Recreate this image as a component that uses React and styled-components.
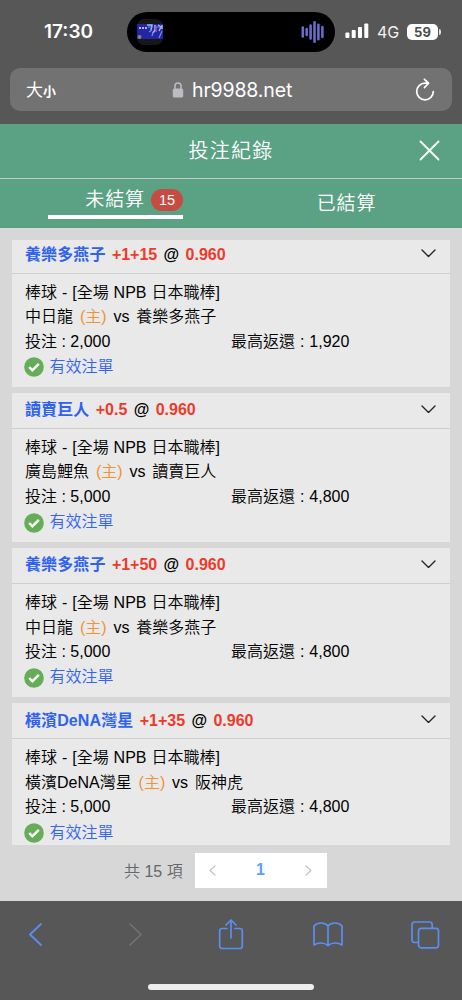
import React from "react";
import styled, { createGlobalStyle } from "styled-components";

const GlobalStyle = createGlobalStyle`
  *, *::before, *::after { box-sizing: border-box; }
  body { margin: 0; background: #575757; }
  svg { display: block; flex: none; }
`;

const Screen = styled.div`
  display: flex;
  flex-direction: column;
  width: 462px;
  height: 1000px;
  overflow: hidden;
  background: #575757;
  color: #000;
  font-family: "Liberation Sans", "Noto Sans CJK TC", sans-serif;
`;

const StatusBar = styled.div`
  display: flex;
  align-items: center;
  height: 40px;
  margin-top: 12px;
  color: #fff;
  font-family: Inter, sans-serif;
`;

const Clock = styled.div`
  width: 127px;
  padding-left: 44px;
  font-size: 19px;
  font-weight: 600;
  line-height: 40px;
  letter-spacing: 0;
`;

const Island = styled.div`
  display: flex;
  align-items: center;
  justify-content: space-between;
  width: 208px;
  height: 40px;
  padding: 0 10px 0 10px;
  border-radius: 20px;
  background: #000;
`;

const Network = styled.div`
  margin-left: 7px;
  font-size: 16px;
  line-height: 40px;
  color: #f0f0f0;
  width: 23px;
  white-space: nowrap;
  letter-spacing: -0.2px;
`;

const Signal = styled.div`
  margin-left: 10px;
  padding-bottom: 3px;
`;

const Battery = styled.div`
  position: relative;
  width: 31px;
  height: 16px;
  margin: 0 0 1px 7px;
  border-radius: 5px;
  background: #fff;
  color: #4c4c4c;
  font-size: 13px;
  font-weight: 700;
  line-height: 16px;
  text-align: center;
  &::after {
    content: "";
    position: absolute;
    right: -3px;
    top: 5px;
    width: 2px;
    height: 6px;
    border-radius: 0 2px 2px 0;
    background: #ddd;
  }
`;

const AddressBar = styled.div`
  display: flex;
  align-items: center;
  height: 43px;
  margin: 16px 10px 13px;
  padding: 0 17px 0 16px;
  border-radius: 10px;
  background: #727272;
  color: #fff;
`;

const TextSize = styled.div`
  display: flex;
  align-items: baseline;
  width: 146px;
  font-family: "Noto Sans CJK TC", sans-serif;
  font-weight: 400;
  font-size: 17px;
  line-height: 43px;
`;

const SmallGlyph = styled.span`
  font-size: 13px;
  font-weight: 700;
`;

const Url = styled.div`
  flex: 1;
  margin-left: 8px;
  padding-top: 1px;
  font-family: Inter, sans-serif;
  font-size: 19.5px;
  line-height: 42px;
  letter-spacing: -0.15px;
`;

const Header = styled.header`
  display: grid;
  grid-template-columns: 60px 1fr 60px;
  align-items: center;
  height: 55px;
  border-bottom: 1px solid #c6cdc9;
  background: #5ba284;
  color: #fff;
`;

const Title = styled.h1`
  grid-column: 2;
  margin: 0;
  font-size: 20px;
  font-weight: 350;
  line-height: 54px;
  letter-spacing: 1.2px;
  text-align: center;
`;

const CloseButton = styled.button`
  display: flex;
  padding: 0 0 2px 17px;
  border: 0;
  background: none;
`;

const Tabs = styled.nav`
  display: flex;
  height: 49px;
  padding: 0 48px;
  background: #5ba284;
  color: #fff;
`;

const Tab = styled.div`
  display: flex;
  align-items: center;
  justify-content: ${(p) => (p.$active ? "flex-end" : "center")};
  width: 135px;
  height: ${(p) => (p.$active ? "40px" : "49px")};
  margin-right: ${(p) => (p.$active ? "96px" : "0")};
  border-bottom: ${(p) => (p.$active ? "4px solid #fff" : "0")};
  font-size: 19px;
  font-weight: 350;
  letter-spacing: 0.9px;
  line-height: 30px;
`;

const TabLabel = styled.span`
  transform: translateY(${(p) => p.$shift || 0}px);
`;

const Badge = styled.span`
  width: 32px;
  height: 22px;
  margin: 5px 0 0 6px;
  border-radius: 11px;
  background: #c64b42;
  font-size: 14.5px;
  font-weight: 400;
  line-height: 22px;
  letter-spacing: 0;
  text-align: center;
`;

const Content = styled.main`
  display: flex;
  flex-direction: column;
  height: 673px;
  padding: 12px 12px 0;
  background: #d7d7d7;
`;

const BetList = styled.div`
  height: 605px;
  overflow: hidden;
`;

const BetStack = styled.div`
  display: flex;
  flex-direction: column;
  gap: 6px;
  margin-top: -2.4px;
`;

const Card = styled.article`
  flex: none;
  height: 149.2px;
  background: #e9e9e9;
`;

const CardHeader = styled.div`
  display: flex;
  align-items: center;
  justify-content: space-between;
  height: 36px;
  padding: 0 14px 0 13px;
  border-bottom: 1px solid #cecece;
  font-size: 16px;
  font-weight: 700;
  line-height: 34px;
  white-space: pre;
`;

const Selection = styled.span`
  word-spacing: 1.9px;
`;

const Expand = styled.span`
  padding-bottom: 3px;
`;

const Team = styled.span`
  color: #2f62f0;
  letter-spacing: 0.1px;
`;

const Odds = styled.span`
  color: #ed3a2b;
`;

const CardBody = styled.div`
  padding: 7px 13px 0;
  font-size: 16px;
  font-weight: 350;
  line-height: 24.6px;
`;

const Line = styled.div`
  display: flex;
  height: 24.6px;
  white-space: pre;
  word-spacing: ${(p) => p.$gap || "0.5px"};
`;

const Home = styled.span`
  color: #ee9436;
`;

const Half = styled.span`
  width: 206px;
  word-spacing: 0;
`;

const Valid = styled.div`
  display: flex;
  align-items: center;
  gap: 5px;
  height: 26px;
  margin-left: -0.6px;
  color: #3465ef;
`;

const PaginationRow = styled.div`
  display: flex;
  align-items: center;
  height: 50px;
  padding-left: 112px;
`;

const Total = styled.span`
  width: 71px;
  color: #66676a;
  font-size: 16px;
  font-weight: 350;
  white-space: nowrap;
`;

const Pager = styled.div`
  display: flex;
  align-items: center;
  justify-content: space-between;
  width: 132px;
  height: 35px;
  padding: 0 15px 0 14px;
  background: #fff;
  color: #5d9ff5;
  font-size: 16px;
  font-weight: 700;
`;

const Toolbar = styled.footer`
  display: grid;
  grid-template-columns: 71px 129px 62px 132px 62px;
  justify-content: start;
  justify-items: center;
  align-items: center;
  height: 67px;
`;

const HomeIndicator = styled.div`
  width: 166px;
  height: 6px;
  margin: 16px 0 0 148px;
  border-radius: 3px;
  background: #eee;
`;

const bets = [
  { team: "養樂多燕子", line: "+1+15", home: "中日龍", away: "養樂多燕子", stake: "2,000", payout: "1,920" },
  { team: "讀賣巨人", line: "+0.5", home: "廣島鯉魚", away: "讀賣巨人", stake: "5,000", payout: "4,800" },
  { team: "養樂多燕子", line: "+1+50", home: "中日龍", away: "養樂多燕子", stake: "5,000", payout: "4,800" },
  { team: "橫濱DeNA灣星", line: "+1+35", home: "橫濱DeNA灣星", away: "阪神虎", stake: "5,000", payout: "4,800" },
];

function Artwork() {
  return (
    <svg width="26" height="26" viewBox="0 0 26 26">
      <rect width="26" height="26" rx="7" fill="#171717" />
      <rect y="5" width="26" height="15" fill="#2424a5" />
      <path d="M2 9h8" stroke="#a9b9e0" strokeWidth="2" strokeDasharray="2 1" />
      <path d="M10 6h5l-1 5m4-5v5l-2 3M21 6l3 2-2 4m3-6v4" stroke="#a3bde6" strokeWidth="1.4" fill="none" />
      <path d="M11 8h5m2 0h6M12 13l3-2m7 8 3-7m-10 5 1-4" stroke="#6e93dc" strokeWidth="1.2" fill="none" />
      <path d="M19 8v5" stroke="#a94ab5" strokeWidth="1.6" />
      <circle cx="2.5" cy="18" r="2" fill="#858573" />
    </svg>
  );
}

function AudioBars() {
  return (
    <svg width="24" height="24" viewBox="0 0 24 24" stroke="#6b6bc8" strokeWidth="2.6" strokeLinecap="round">
      <path d="M1.8 7.5v9M5.7 9v6M9.6 5.5v13M13.5 2.2v19.6M17.4 4.7v14.6M21.4 7v10" />
    </svg>
  );
}

function Chevron({ width, height, color, stroke, dir }) {
  const points = {
    left: `${width - 1},1 1,${height / 2} ${width - 1},${height - 1}`,
    right: `1,1 ${width - 1},${height / 2} 1,${height - 1}`,
    down: `1,1 ${width / 2},${height - 1} ${width - 1},1`,
  }[dir];
  return (
    <svg width={width} height={height} viewBox={`0 0 ${width} ${height}`} fill="none" stroke={color} strokeWidth={stroke} strokeLinecap="round" strokeLinejoin="round">
      <polyline points={points} />
    </svg>
  );
}

function BetCard({ bet }) {
  return (
    <Card>
      <CardHeader>
        <Selection>
          <Team>{bet.team}</Team> <Odds>{bet.line}</Odds> @ <Odds>0.960</Odds>
        </Selection>
        <Expand>
          <Chevron width={15} height={8.5} color="#252525" stroke={1.4} dir="down" />
        </Expand>
      </CardHeader>
      <CardBody>
        <Line>棒球 - [全場 NPB 日本職棒]</Line>
        <Line $gap="2.4px">{bet.home} <Home>(主)</Home> vs {bet.away}</Line>
        <Line>
          <Half>投注 : {bet.stake}</Half>
          <span>最高返還 : {bet.payout}</span>
        </Line>
        <Valid>
          <svg width="20" height="20" viewBox="0 0 20 20">
            <circle cx="10" cy="10" r="9.8" fill="#65ad59" />
            <path d="m5.2 10 3.2 3.3 6.4-6.4" fill="none" stroke="#fff" strokeWidth="2.5" />
          </svg>
          <span>有效注單</span>
        </Valid>
      </CardBody>
    </Card>
  );
}

export default function App() {
  return (
    <Screen>
      <GlobalStyle />
      <StatusBar>
        <Clock>17:30</Clock>
        <Island>
          <Artwork />
          <AudioBars />
        </Island>
        <Signal>
          <svg width="25" height="17" viewBox="0 0 25 17" fill="#fff">
            <rect x="0.4" y="10.5" width="4" height="5.5" rx="1" />
            <rect x="6.7" y="8" width="4" height="8" rx="1" />
            <rect x="13" y="5" width="4" height="11" rx="1" />
            <rect x="19.3" y="1.5" width="4" height="14.5" rx="1" />
          </svg>
        </Signal>
        <Network>4G</Network>
        <Battery>59</Battery>
      </StatusBar>
      <AddressBar>
        <TextSize>大<SmallGlyph>小</SmallGlyph></TextSize>
        <svg width="12" height="16" viewBox="0 0 12 16">
          <rect x="0.8" y="6.5" width="10.4" height="9" rx="1.5" fill="#bdbcc2" />
          <path d="M3 7V4a3 3 0 0 1 6 0v3" fill="none" stroke="#bdbcc2" strokeWidth="1.5" />
        </svg>
        <Url>hr9988.net</Url>
        <svg width="20" height="24" viewBox="0 0 20 24" fill="none" stroke="#fff" strokeWidth="1.7" strokeLinecap="round" strokeLinejoin="round">
          <path d="M13.5 5.2H10a8.3 8.3 0 1 0 8.3 8.3M9.4 1.4l4.2 3.8-4.2 4.4" />
        </svg>
      </AddressBar>
      <Header>
        <Title>投注紀錄</Title>
        <CloseButton aria-label="close">
          <svg width="21" height="21" viewBox="0 0 21 21" stroke="#fff" strokeWidth="1.8" strokeLinecap="round">
            <path d="m1.5 1.5 18 18m0-18-18 18" />
          </svg>
        </CloseButton>
      </Header>
      <Tabs>
        <Tab $active>
          <TabLabel $shift={3}>未結算</TabLabel>
          <Badge>15</Badge>
        </Tab>
        <Tab>
          <TabLabel>已結算</TabLabel>
        </Tab>
      </Tabs>
      <Content>
        <BetList>
          <BetStack>
            {bets.map((bet, i) => <BetCard key={i} bet={bet} />)}
          </BetStack>
        </BetList>
        <PaginationRow>
          <Total>共 15 項</Total>
          <Pager>
            <Chevron width={7} height={11} color="#bfc2c8" stroke={1.3} dir="left" />
            <span>1</span>
            <Chevron width={7} height={11} color="#bfc2c8" stroke={1.3} dir="right" />
          </Pager>
        </PaginationRow>
      </Content>
      <Toolbar>
        <Chevron width={13} height={23} color="#5a8ff0" stroke={1.8} dir="left" />
        <Chevron width={13} height={23} color="#737373" stroke={1.6} dir="right" />
        <svg width="26" height="31" viewBox="0 0 26 31" fill="none" stroke="#5a8ff0" strokeWidth="1.7" strokeLinecap="round" strokeLinejoin="round">
          <path d="M9 9.5H4A2.3 2.3 0 0 0 1.7 11.8v15.4A2.3 2.3 0 0 0 4 29.5h18a2.3 2.3 0 0 0 2.3-2.3V11.8A2.3 2.3 0 0 0 22 9.5h-5M13 19V1.2M8 6l5-5 5 5" />
        </svg>
        <svg width="30" height="25" viewBox="0 0 30 25" fill="none" stroke="#5a8ff0" strokeWidth="1.7" strokeLinejoin="round">
          <path d="M15 4Q12.500 1 8 1T1 4v19q3-2 7-2t7 2.500q3-2.500 7-2.500t7 2V4q-2.500-3-7-3t-7 3v19.500" />
        </svg>
        <svg width="29" height="28" viewBox="0 0 29 28" fill="none" stroke="#5a8ff0" strokeWidth="1.7">
          <rect x="7.5" y="7.3" width="20" height="19.5" rx="2.7" />
          <path d="M7.5 21.5H3.7A2.7 2.7 0 0 1 1 18.8V3.7A2.7 2.7 0 0 1 3.7 1h14.8a2.7 2.7 0 0 1 2.7 2.7v3.6" />
        </svg>
      </Toolbar>
      <HomeIndicator />
    </Screen>
  );
}
